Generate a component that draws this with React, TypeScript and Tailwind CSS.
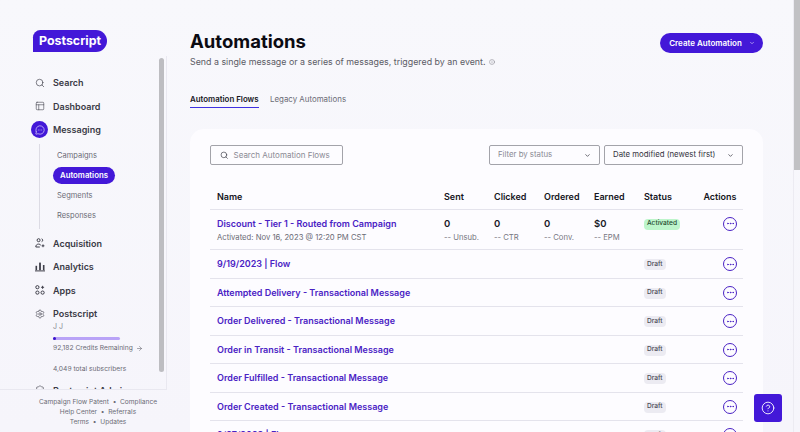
import { Search, PanelsTopLeft, MessageCircleMore, ChevronDown, CircleHelp, Ellipsis, ArrowRight, Settings, Info, ShieldCheck } from "lucide-react";
import React from "react";

function NavItem({ icon, label, active }: { icon: React.ReactNode; label: string; active?: boolean }) {
  return (
    <div className="flex h-[23.5px] items-center shrink-0">
      <div className={"flex h-[17px] w-[17px] items-center justify-center rounded-full " + (active ? "bg-[#4318d8] text-white" : "text-[#3f3f4a]")}>{icon}</div>
      <span className="ml-[5px] text-[9px] font-semibold text-[#3a3a45]">{label}</span>
    </div>
  );
}

function AppsIcon() {
  return (
    <svg width="10" height="10" viewBox="0 0 10 10" fill="none" stroke="currentColor" strokeWidth="1">
      <circle cx="2.4" cy="2.2" r="1.6" />
      <circle cx="2.4" cy="7.6" r="1.6" />
      <circle cx="7.6" cy="7.6" r="1.6" />
      <path d="M7.6 0.8v3M6.1 2.3h3" />
    </svg>
  );
}

function AcquisitionIcon() {
  return (
    <svg width="10" height="10" viewBox="0 0 10 10" fill="none" stroke="currentColor" strokeWidth="1">
      <circle cx="3.6" cy="2.2" r="1.5" />
      <path d="M0.8 9c0-1.8 1-2.9 2.8-2.9 1 0 1.8.4 2.2 1.1M0.8 9h4" />
      <path d="M6.6 0.8a1.5 1.5 0 0 1 0 2.9M8 6.4v2.8M6.6 7.8h2.8" />
    </svg>
  );
}

function AnalyticsIcon() {
  return (
    <svg width="10" height="10" viewBox="0 0 10 10" fill="currentColor">
      <rect x="0.5" y="3.8" width="1.6" height="4.4" />
      <rect x="4.1" y="0.6" width="1.8" height="7.6" />
      <rect x="7.9" y="3" width="1.6" height="5.2" />
      <rect x="0" y="8.4" width="10" height="1" />
    </svg>
  );
}

function Row({ name, sub, status = "Draft", stats }: { name: string; sub?: string; status?: string; stats?: boolean }) {
  const activated = status === "Activated";
  return (
    <div className={"grid grid-cols-[234px_50px_50px_50px_50px_1fr] border-b border-[#e4e3ec] " + (stats ? "h-[40.5px] pt-[7px]" : "h-[28.5px] items-center pt-[1px]")}>
      <div className="pl-[7px]">
        <div className="text-[9px] font-semibold leading-[14px] text-[#4a22c4]">{name}</div>
        {sub && <div className="text-[7.7px] leading-[12px] mt-[1px] text-[#6b6b76]">{sub}</div>}
      </div>
      {stats ? (
        [["0", "-- Unsub."], ["0", "-- CTR"], ["0", "-- Conv."], ["$0", "-- EPM"]].map(([a, b]) => (
          <div key={b}>
            <div className="text-[9.5px] font-semibold leading-[14px] text-[#17171f]">{a}</div>
            <div className="text-[7.7px] leading-[12px] mt-[1px] text-[#77777f]">{b}</div>
          </div>
        ))
      ) : (
        <><div /><div /><div /><div /></>
      )}
      <div className={"flex justify-between pr-[6px] " + (stats ? "items-start" : "items-center")}>
        <span className={"-ml-[0.5px] flex h-[11px] items-center rounded-[4px] px-[3.5px] text-[6.6px] font-medium " + (activated ? "mt-[2px] bg-[#bdf5cb] text-[#1f4a30]" : "mt-[1px] bg-[#ecebf2] text-[#4a4a55]")}>{status}</span>
        <span className="flex h-[14px] w-[14px] items-center justify-center rounded-full border border-[#4a22c4] text-[#4a22c4]">
          <Ellipsis size={9} strokeWidth={2.5} />
        </span>
      </div>
    </div>
  );
}

export default function App() {
  return (
    <div className="relative flex h-[432px] w-[800px] overflow-hidden bg-gradient-to-b from-[#f8f8fc] to-[#f6f5fb] font-['Inter',sans-serif]">
      {/* sidebar */}
      <aside className="flex w-[190px] shrink-0 flex-col">
        <div className="pl-[33px] pt-[30px]">
          <div className="flex h-[22px] w-[74px] items-center justify-center rounded-tl-[8px] rounded-tr-[12px] rounded-br-[12px] bg-[#4318d8] text-[12.4px] font-bold text-white">Postscript</div>
        </div>
        <div className="mt-[4px] flex h-[334px] w-[167px] overflow-hidden border-r border-b border-[#e9e8f0]">
          <div className="flex-1 overflow-hidden pl-[31px] pt-[15px]">
            <NavItem icon={<Search size={10} strokeWidth={1.6} />} label="Search" />
            <NavItem icon={<PanelsTopLeft size={10} strokeWidth={1.4} />} label="Dashboard" />
            <NavItem icon={<MessageCircleMore size={10} strokeWidth={1.4} />} label="Messaging" active />
            <div className="ml-[8px] mt-[2px] flex h-[85px] flex-col items-start border-l border-[#dcdbe4] pl-[13px] pt-[2px] text-[7.5px] text-[#6b6b76]">
              <div className="flex h-[20px] items-center px-[4px]">Campaigns</div>
              <div className="my-[1.5px] flex h-[17px] items-center rounded-full bg-[#4318d8] px-[7px] text-[7.8px] font-semibold text-white">Automations</div>
              <div className="flex h-[20px] items-center px-[4px]">Segments</div>
              <div className="flex h-[20px] items-center px-[4px]">Responses</div>
            </div>
            <div className="mt-[3px]" />
            <NavItem icon={<AcquisitionIcon />} label="Acquisition" />
            <NavItem icon={<AnalyticsIcon />} label="Analytics" />
            <NavItem icon={<AppsIcon />} label="Apps" />
            <NavItem icon={<Settings size={10} strokeWidth={1.5} />} label="Postscript" />
            <div className="-mt-[4px] pl-[22px] text-[7px] leading-[9px] text-[#8a8a94]">J J</div>
            <div className="ml-[22px] mt-[6px] flex h-[3px] w-[67px] rounded-full bg-[#b9a3f7]">
              <div className="h-[3px] w-[3px] rounded-full bg-[#3a12cc]" />
            </div>
            <div className="ml-[22px] mt-[3.5px] flex items-center gap-[3px] whitespace-nowrap text-[6.7px] leading-[10px] text-[#6b6b76]">92,182 Credits Remaining <ArrowRight size={7} /></div>
            <div className="ml-[22px] mt-[10.5px] whitespace-nowrap text-[6.7px] leading-[10px] text-[#6b6b76]">4,049 total subscribers</div>
            <div className="mt-[5px]">
              <NavItem icon={<ShieldCheck size={10} strokeWidth={1.5} />} label="Postscript Admin" />
            </div>
          </div>
          <div className="flex w-[7px] shrink-0 pr-[1px] pt-[2px]">
            <div className="h-[314px] w-[5px] rounded-full bg-[#bdbdc1]" />
          </div>
        </div>
        <div className="mt-[7px] w-[196px] text-center text-[6.6px] leading-[10px] text-[#6b6b76]">
          <div>Campaign Flow Patent&nbsp; • &nbsp;Compliance</div>
          <div>Help Center&nbsp; • &nbsp;Referrals</div>
          <div>Terms&nbsp; • &nbsp;Updates</div>
        </div>
      </aside>

      {/* main */}
      <main className="flex w-[573px] shrink-0 flex-col">
        <div className="flex items-start justify-between pt-[29px]">
          <div>
            <h1 className="text-[18.5px] font-bold leading-[24px] text-[#0b0b12]">Automations</h1>
            <p className="mt-[1.5px] mb-[1px] flex items-center gap-[3px] text-[8.85px] leading-[14px] text-[#5c5c66]">
              Send a single message or a series of messages, triggered by an event.
              <Info size={6} strokeWidth={1.5} />
            </p>
          </div>
          <button className="mt-[4px] flex h-[20px] w-[103px] items-center justify-center gap-[7px] rounded-full bg-[#4318d8] pl-[1px] text-[8px] font-semibold text-white">
            Create Automation <ChevronDown size={6} strokeWidth={2} />
          </button>
        </div>

        <div className="mt-[23.5px] flex gap-[11.5px] text-[7.9px] leading-[12px]">
          <div className="h-[15px] w-[68.5px] whitespace-nowrap border-b-[1.5px] border-[#3f30e0] font-semibold text-[#15151d]">Automation Flows</div>
          <div className="text-[#6b6b76]">Legacy Automations</div>
        </div>

        <div className="mt-[21px] h-[400px] rounded-t-[14px] bg-[#fdfcff] px-[20px] pt-[16px]">
          <div className="flex items-center justify-between">
            <div className="flex h-[20px] w-[133px] items-center rounded-[2px] border border-[#a3a3aa] pl-[9px] text-[8px] text-[#8a8a94]">
              <Search size={8.5} strokeWidth={1.8} className="mr-[5px] text-[#33333d]" />
              Search Automation Flows
            </div>
            <div className="flex gap-[3.5px] text-[7.8px]">
              <div className="flex h-[20px] w-[111px] items-center justify-between rounded-[2px] border border-[#a3a3aa] pl-[8px] pr-[8px] text-[#8a8a94]">
                Filter by status <ChevronDown size={7} strokeWidth={2.4} className="text-[#33333d]" />
              </div>
              <div className="flex h-[20px] w-[139.5px] items-center justify-between rounded-[2px] border border-[#a3a3aa] pl-[8.5px] pr-[8px] text-[#33333d]">
                Date modified (newest first) <ChevronDown size={7} strokeWidth={2.4} className="text-[#33333d]" />
              </div>
            </div>
          </div>

          <div className="mt-[14px] grid h-[30.5px] grid-cols-[234px_50px_50px_50px_50px_1fr] items-center border-b border-[#e4e3ec] pt-[5px] text-[9px] font-semibold text-[#15151d]">
            <div className="pl-[7px]">Name</div>
            <div>Sent</div>
            <div>Clicked</div>
            <div>Ordered</div>
            <div>Earned</div>
            <div className="flex justify-between pr-[6.5px]"><span>Status</span><span>Actions</span></div>
          </div>
          <Row name="Discount - Tier 1 - Routed from Campaign" sub="Activated: Nov 16, 2023 @ 12:20 PM CST" status="Activated" stats />
          <Row name="9/19/2023 | Flow" />
          <Row name="Attempted Delivery - Transactional Message" />
          <Row name="Order Delivered - Transactional Message" />
          <Row name="Order in Transit - Transactional Message" />
          <Row name="Order Fulfilled - Transactional Message" />
          <Row name="Order Created - Transactional Message" />
          <Row name="9/27/2023 | Flow" />
        </div>
      </main>

      {/* page scrollbar */}
      <div className="ml-auto flex w-[7px] shrink-0 border-l border-[#ecebf2]">
        <div className="h-[170px] w-[6px] bg-[#c1c1c4]" />
      </div>

      <button className="absolute left-[754px] top-[394px] flex h-[28px] w-[28px] items-center justify-center rounded-[3px] bg-[#4318d8] text-white">
        <CircleHelp size={14} strokeWidth={1.5} />
      </button>
    </div>
  );
}
